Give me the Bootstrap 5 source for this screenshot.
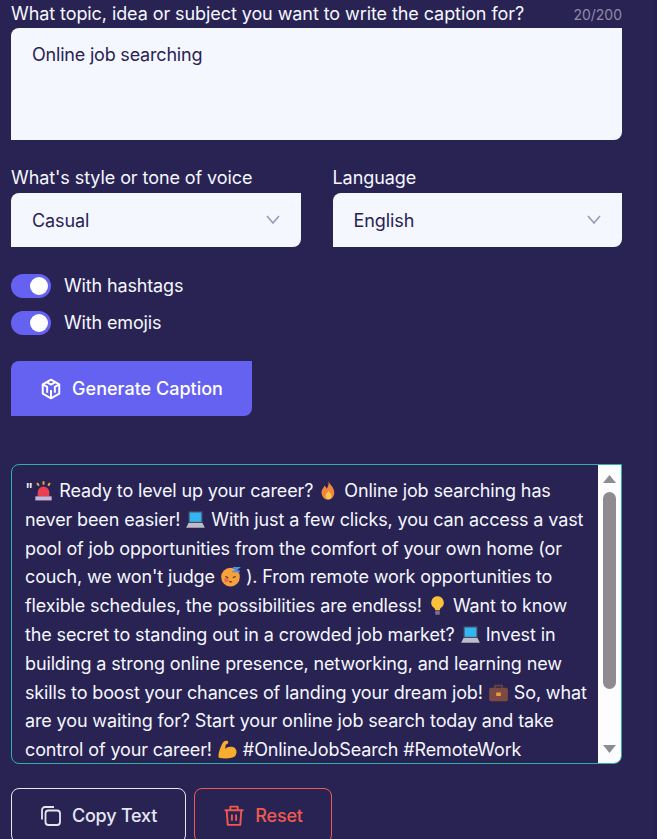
<!DOCTYPE html>
<html lang="en">
<head>
    <meta charset="UTF-8">
    <meta name="viewport" content="width=device-width, initial-scale=1">
    <title>Caption Generator</title>
    <link href="https://cdn.jsdelivr.net/npm/bootstrap@5.3.0/dist/css/bootstrap.min.css" rel="stylesheet">
    <style>
        html { overflow: hidden; height: 839px; }
        body {
            background: #292353;
            border-right: 3px solid #25204c;
            color: #f5f7ff;
            font-family: "Inter", "Liberation Sans", sans-serif;
            font-size: 18px;
            letter-spacing: -0.08px;
            height: 839px;
            overflow: hidden;
        }
        .page-wrap { width: 622px; padding-left: 11px; }
        .field-label { display: block; font-size: 18px; line-height: 22px; color: #f5f7ff; }
        .top-label { height: 28px; padding-top: 3px; }
        .counter { font-size: 14px; line-height: 24px; color: #8f8ba8; letter-spacing: 0; }
        .topic-input.form-control {
            height: 112px;
            padding: 14px 21px;
            background: #f5f7ff;
            border: 0;
            border-radius: 8px 0 8px 0;
            color: #292353;
            font-size: 18px;
            line-height: 26px;
            resize: none;
            letter-spacing: -0.2px;
        }
        .select-row { margin-top: 27px; gap: 32px; }
        .select-row > div { flex: 1 1 0; }
        .select-row .field-label { height: 26px; line-height: 22px; }
        .tone-select.form-select {
            height: 54px;
            padding: 1px 40px 0 21px;
            border: 0;
            border-radius: 8px 0 8px 0;
            background-color: #f5f7ff;
            background-position: right 20px center;
            background-size: 16px 12px;
            --bs-form-select-bg-img: url("data:image/svg+xml,%3csvg xmlns='http://www.w3.org/2000/svg' viewBox='0 0 16 12'%3e%3cpath fill='none' stroke='%239a9ab5' stroke-width='1.6' d='M2 2l6 7 6-7'/%3e%3c/svg%3e");
            color: #292353;
            font-size: 18px;
            letter-spacing: -0.08px;
        }
        .toggle-list { margin-top: 27px; gap: 13px; }
        .toggle-item.form-check { display: flex; align-items: center; gap: 13px; padding: 0; margin: 0; min-height: 24px; }
        .toggle-item .form-check-input {
            width: 40px; height: 24px; margin: 0; float: none;
            background-color: #6562f2;
            border: 0;
            background-image: url("data:image/svg+xml,%3csvg xmlns='http://www.w3.org/2000/svg' viewBox='-4 -4 8 8'%3e%3ccircle r='3' fill='%23fff'/%3e%3c/svg%3e");
        }
        .toggle-item .form-check-label { line-height: 22px; margin-bottom: 1px; letter-spacing: -0.15px; }
        .gen-btn.btn {
            margin-top: 26px;
            width: 241px; height: 55px;
            background: #6562f2;
            border: 0;
            border-radius: 8px 0 8px 0;
            color: #fff;
            font-size: 18px;
            font-weight: 500;
            letter-spacing: 0;
        }
        .icon-gap { gap: 10px; }
        .result-box {
            margin-top: 48px;
            width: 611px; height: 300px;
            border: 1px solid #2bb3a8;
            border-radius: 8px 0 8px 8px;
            overflow: hidden;
        }
        .result-text {
            padding: 12px 0 0 13px;
            font-size: 18px;
            line-height: 28.8px;
            white-space: nowrap;
            overflow: hidden;
            letter-spacing: -0.13px;
        }
        .emo { width: 21px; height: 21px; vertical-align: -4px; margin: 0 5px; }
        .emo-first { margin: 0 5px 0 0; }
        .fake-bar { width: 23px; background: #fdfcff; padding: 10px 5px 10px 5px; }
        .bar-arrow { width: 13px; height: 8px; fill: #8e8c90; }
        .bar-thumb { width: 13px; height: 197px; margin: 9px 0 auto; background: #8e8c90; border-radius: 7px; }
        .action-row { margin-top: 24px; gap: 8px; }
        .act-btn.btn {
            height: 55px;
            background: transparent;
            border-radius: 8px;
            font-size: 18px;
            font-weight: 500;
            letter-spacing: -0.2px;
        }
        .copy-btn.btn { width: 175px; border: 1px solid #e6e6f2; color: #e6e6f2; }
        .reset-btn.btn { width: 138px; border: 1px solid #ef5a50; color: #ef5a50; }
    </style>
</head>
<body>
    <svg width="0" height="0" class="d-block position-absolute">
        <symbol id="e-siren" viewBox="0 0 18 18">
            <path d="M9 1v3M3.500 2.500l1.500 2.500M14.500 2.500l-1.500 2.500" stroke="#e8b04a" stroke-width="1.600" fill="none"/>
            <path d="M4 14V10.500a5 5 0 0 1 10 0V14z" fill="#ea3f52"/>
            <rect x="2" y="14" width="14" height="3.500" fill="#c9b6d8"/>
        </symbol>
        <symbol id="e-fire" viewBox="0 0 18 18">
            <path d="M9 1c1 3 5 5 5 10a5.500 6 0 0 1-11 0c0-3 2-4 2.500-6 1 .5 1.500 1.500 1.700 2.500C8.500 6 9.500 4 9 1z" fill="#f2863a"/>
            <path d="M9 9c.5 2 2.500 2.500 2.500 4.500a2.500 3 0 0 1-5 0c0-2 2-2.500 2.500-4.500z" fill="#fbc94f"/>
        </symbol>
        <symbol id="e-laptop" viewBox="0 0 18 18">
            <rect x="3" y="2" width="12" height="10" fill="#4a4f68"/>
            <rect x="4" y="3" width="10" height="8" fill="#35b4f2"/>
            <path d="M3 12h12l2 4H1z" fill="#bdbdca"/>
        </symbol>
        <symbol id="e-sleep" viewBox="0 0 18 18">
            <circle cx="9" cy="9.500" r="8" fill="#f6a13c"/>
            <circle cx="5.500" cy="12" r="2" fill="#ef6b4f"/>
            <path d="M4.500 9l2.500 1M13.500 9l-2.500 1M8 13.500h2" stroke="#5b3a2a" stroke-width="1.100" fill="none"/>
            <path d="M11 1.500h5l-4 3h5" stroke="#4f8fe8" stroke-width="1.500" fill="none"/>
        </symbol>
        <symbol id="e-bulb" viewBox="0 0 18 18">
            <path d="M9 1a5.500 5.500 0 0 0-3 10c.7.600 1 1.200 1 2h4c0-.8.300-1.400 1-2A5.500 5.500 0 0 0 9 1z" fill="#fbc13c"/>
            <rect x="7" y="13.500" width="4" height="3.500" rx="1" fill="#77708f"/>
        </symbol>
        <symbol id="e-case" viewBox="0 0 18 18">
            <path d="M6 5V3h6v2" stroke="#6b4338" stroke-width="1.500" fill="none"/>
            <rect x="1" y="5" width="16" height="11.500" rx="1.500" fill="#7b4a42"/>
            <rect x="7" y="9" width="4" height="3" fill="#e89a3c"/>
        </symbol>
        <symbol id="e-arm" viewBox="0 0 18 18">
            <path d="M1.500 16c-.8-3 1-8 3-12 .5-1.500 2-3 4-2.500 1.500.4 1.500 2 .5 2.500L7.500 5 7 8.500c2-2 6-2.500 8.500-.5 2 2 1.500 6-1 7.500-3 1.500-9 1.500-13 .5z" fill="#f8ad2e"/>
        </symbol>
    </svg>

    <div class="page-wrap">
        <div class="top-label d-flex justify-content-between align-items-start">
            <label class="field-label" for="topic">What topic, idea or subject you want to write the caption for?</label>
            <span class="counter">20/200</span>
        </div>
        <textarea class="topic-input form-control" id="topic">Online job searching</textarea>

        <div class="select-row d-flex">
            <div>
                <label class="field-label" for="tone">What's style or tone of voice</label>
                <select class="tone-select form-select" id="tone"><option>Casual</option></select>
            </div>
            <div>
                <label class="field-label" for="lang">Language</label>
                <select class="tone-select form-select" id="lang"><option>English</option></select>
            </div>
        </div>

        <div class="toggle-list d-flex flex-column">
            <div class="toggle-item form-check form-switch">
                <input class="form-check-input" type="checkbox" id="hashtags" checked>
                <label class="form-check-label" for="hashtags">With hashtags</label>
            </div>
            <div class="toggle-item form-check form-switch">
                <input class="form-check-input" type="checkbox" id="emojis" checked>
                <label class="form-check-label" for="emojis">With emojis</label>
            </div>
        </div>

        <button class="gen-btn btn d-flex align-items-center justify-content-center icon-gap" type="button">
            <svg width="22" height="22" viewBox="0 0 20 20" fill="none" stroke="#fff" stroke-width="1.800" stroke-linejoin="round">
                <path d="M10 1.500l7.500 4.200v8.600L10 18.500l-7.500-4.200V5.700z"/>
                <path d="M6 3.800L10 6l4-2.200M2.500 5.700L6.500 8v5.500M17.500 5.700L13.500 8v5.500M10 18.500V11"/>
            </svg>
            Generate Caption
        </button>

        <div class="result-box d-flex">
            <div class="result-text flex-grow-1">
                "<svg class="emo emo-first"><use href="#e-siren"/></svg>Ready to level up your career?<svg class="emo"><use href="#e-fire"/></svg>Online job searching has<br>
                never been easier!<svg class="emo"><use href="#e-laptop"/></svg>With just a few clicks, you can access a vast<br>
                pool of job opportunities from the comfort of your own home (or<br>
                couch, we won't judge<svg class="emo"><use href="#e-sleep"/></svg>). From remote work opportunities to<br>
                flexible schedules, the possibilities are endless!<svg class="emo"><use href="#e-bulb"/></svg>Want to know<br>
                the secret to standing out in a crowded job market?<svg class="emo"><use href="#e-laptop"/></svg>Invest in<br>
                building a strong online presence, networking, and learning new<br>
                skills to boost your chances of landing your dream job!<svg class="emo"><use href="#e-case"/></svg>So, what<br>
                are you waiting for? Start your online job search today and take<br>
                control of your career!<svg class="emo"><use href="#e-arm"/></svg>#OnlineJobSearch #RemoteWork
            </div>
            <div class="fake-bar d-flex flex-column align-items-center flex-shrink-0">
                <svg class="bar-arrow d-block"><path d="M6.500 0L13 8H0z"/></svg>
                <div class="bar-thumb"></div>
                <svg class="bar-arrow d-block"><path d="M0 0h13L6.500 8z"/></svg>
            </div>
        </div>

        <div class="action-row d-flex">
            <button class="act-btn copy-btn btn d-flex align-items-center justify-content-center icon-gap" type="button">
                <svg width="22" height="22" viewBox="0 0 22 22" fill="none" stroke="currentColor" stroke-width="1.800">
                    <rect x="5.500" y="5.500" width="14.500" height="14.500" rx="3"/>
                    <path d="M2 14.500V5a3 3 0 0 1 3-3h9"/>
                </svg>
                Copy Text
            </button>
            <button class="act-btn reset-btn btn d-flex align-items-center justify-content-center icon-gap" type="button">
                <svg width="22" height="23" viewBox="0 0 20 22" fill="none" stroke="currentColor" stroke-width="1.800" stroke-linejoin="round">
                    <path d="M1 6h18M6.500 6V2.500h7V6M3 6l1 14h12l1-14M8 10v6M12 10v6"/>
                </svg>
                Reset
            </button>
        </div>
    </div>
</body>
</html>
